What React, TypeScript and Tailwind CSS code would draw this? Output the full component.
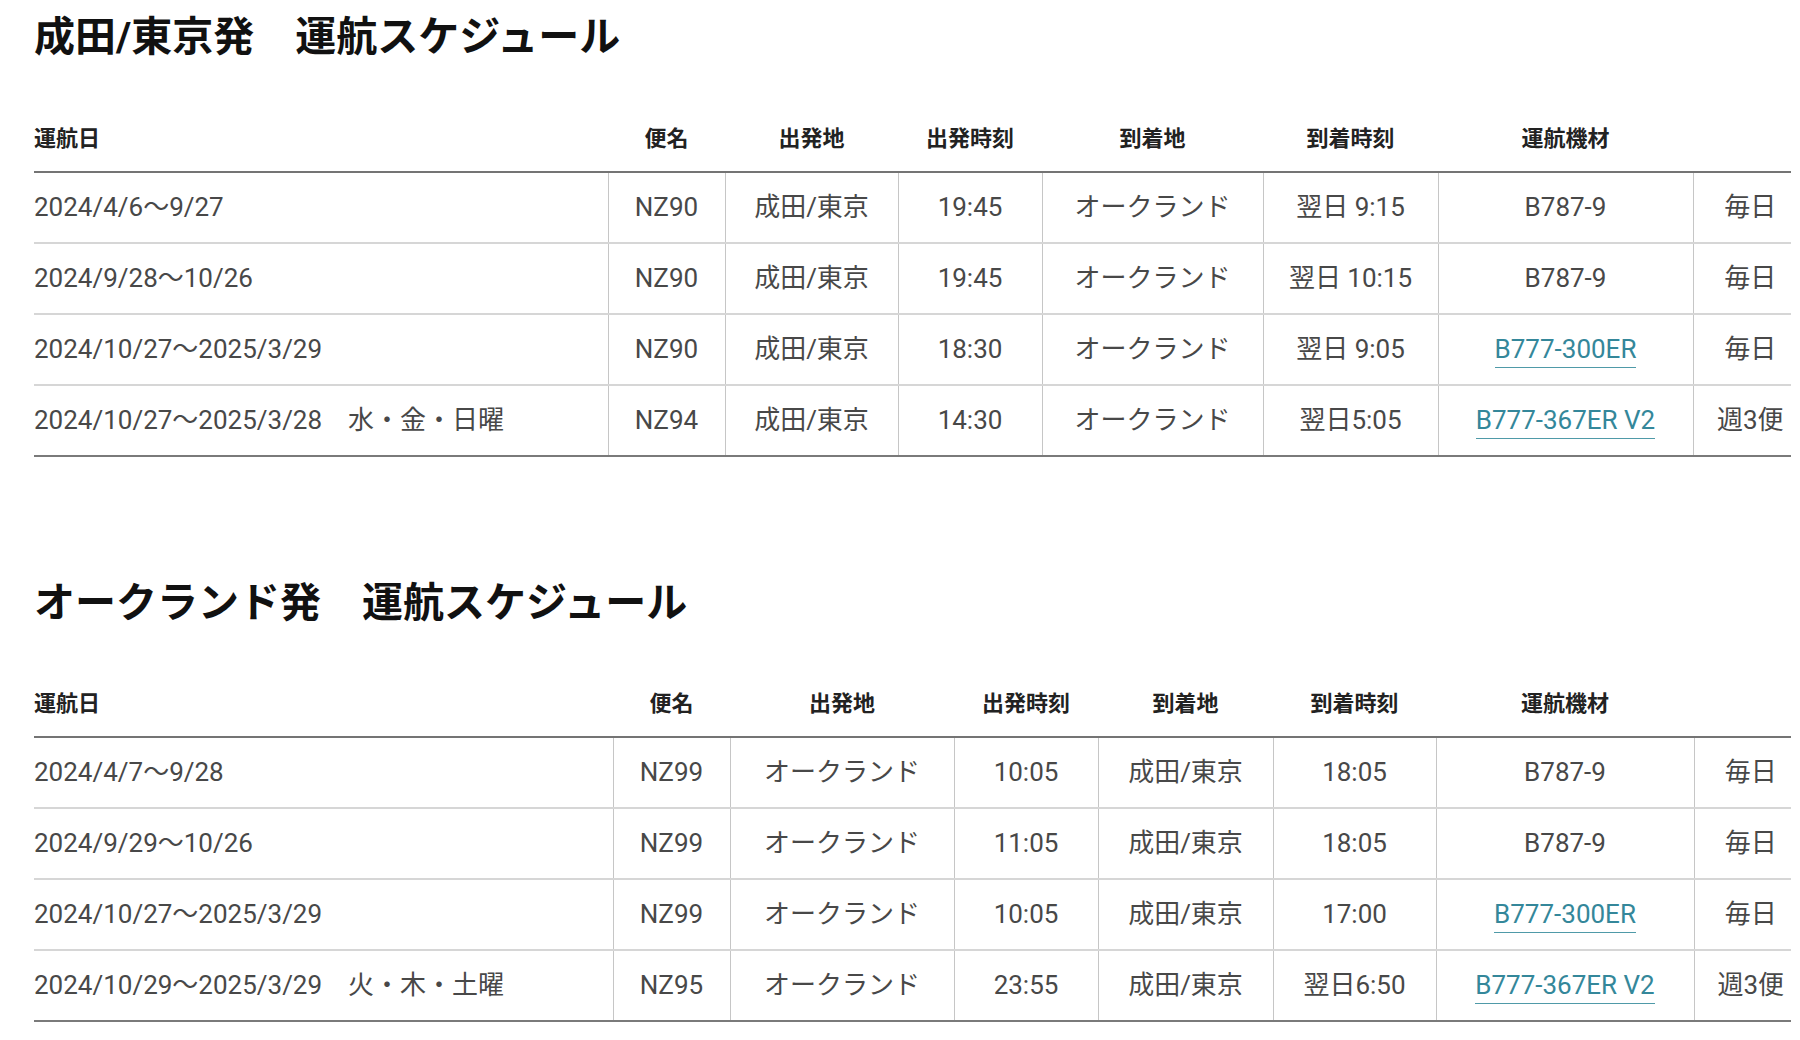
import React from 'react';

type Row = {
  period: string;
  flight: string;
  from: string;
  dep: string;
  to: string;
  arr: string;
  aircraft: string;
  link?: boolean;
  freq: string;
};

const outbound: Row[] = [
  { period: '2024/4/6～9/27', flight: 'NZ90', from: '成田/東京', dep: '19:45', to: 'オークランド', arr: '翌日 9:15', aircraft: 'B787-9', freq: '毎日' },
  { period: '2024/9/28～10/26', flight: 'NZ90', from: '成田/東京', dep: '19:45', to: 'オークランド', arr: '翌日 10:15', aircraft: 'B787-9', freq: '毎日' },
  { period: '2024/10/27～2025/3/29', flight: 'NZ90', from: '成田/東京', dep: '18:30', to: 'オークランド', arr: '翌日 9:05', aircraft: 'B777-300ER', link: true, freq: '毎日' },
  { period: '2024/10/27～2025/3/28　水・金・日曜', flight: 'NZ94', from: '成田/東京', dep: '14:30', to: 'オークランド', arr: '翌日5:05', aircraft: 'B777-367ER V2', link: true, freq: '週3便' },
];

const inbound: Row[] = [
  { period: '2024/4/7～9/28', flight: 'NZ99', from: 'オークランド', dep: '10:05', to: '成田/東京', arr: '18:05', aircraft: 'B787-9', freq: '毎日' },
  { period: '2024/9/29～10/26', flight: 'NZ99', from: 'オークランド', dep: '11:05', to: '成田/東京', arr: '18:05', aircraft: 'B787-9', freq: '毎日' },
  { period: '2024/10/27～2025/3/29', flight: 'NZ99', from: 'オークランド', dep: '10:05', to: '成田/東京', arr: '17:00', aircraft: 'B777-300ER', link: true, freq: '毎日' },
  { period: '2024/10/29～2025/3/29　火・木・土曜', flight: 'NZ95', from: 'オークランド', dep: '23:55', to: '成田/東京', arr: '翌日6:50', aircraft: 'B777-367ER V2', link: true, freq: '週3便' },
];

const headers = ['便名', '出発地', '出発時刻', '到着地', '到着時刻', '運航機材', ''];

function Schedule({ rows, widths }: { rows: Row[]; widths: string[] }) {
  return (
    <table className="w-[1757px] table-fixed border-collapse">
      <colgroup>
        {widths.map((w, i) => (
          <col key={i} className={w} />
        ))}
      </colgroup>
      <thead>
        <tr className="border-b-2 border-[#747474]">
          <th className="h-[66px] text-left align-middle text-[22px] font-bold text-[#222]">運航日</th>
          {headers.map((h, i) => (
            <th key={i} className="h-[66px] text-center align-middle text-[22px] font-bold text-[#222]">
              {h}
            </th>
          ))}
        </tr>
      </thead>
      <tbody>
        {rows.map((r, i) => (
          <tr
            key={i}
            className={i === rows.length - 1 ? 'border-b-2 border-[#7a7a7a]' : 'border-b-2 border-[#d6d6d6]'}
          >
            <td className="h-[71px] text-left align-middle whitespace-nowrap">{r.period}</td>
            <td className="border-l border-[#c6c6c6] text-center">{r.flight}</td>
            <td className="border-l border-[#c6c6c6] text-center">{r.from}</td>
            <td className="border-l border-[#c6c6c6] text-center">{r.dep}</td>
            <td className="border-l border-[#c6c6c6] text-center">{r.to}</td>
            <td className="border-l border-[#c6c6c6] text-center">{r.arr}</td>
            <td className="border-l border-[#c6c6c6] text-center">
              {r.link ? (
                <a className="inline-block border-b border-[#4f9aa8] pb-[2px] leading-[31px] text-[#34879a]">
                  {r.aircraft}
                </a>
              ) : (
                r.aircraft
              )}
            </td>
            <td className="border-l border-[#c6c6c6] pl-[16px] text-center whitespace-nowrap">{r.freq}</td>
          </tr>
        ))}
      </tbody>
    </table>
  );
}

export default function App() {
  return (
    <div className="min-h-screen bg-white pl-[34px] pt-[13px] font-['Roboto','Noto_Sans_CJK_JP',sans-serif] text-[26px] text-[#484848]">
      <h2 className="text-[41px] font-bold leading-[48px] text-[#111]">成田/東京発　運航スケジュール</h2>
      <div className="mt-[45px]">
        <Schedule
          rows={outbound}
          widths={['w-[574px]', 'w-[117px]', 'w-[173px]', 'w-[144px]', 'w-[221px]', 'w-[175px]', 'w-[255px]', 'w-[98px]']}
        />
      </div>

      <h2 className="mt-[122px] text-[41px] font-bold leading-[48px] text-[#111]">オークランド発　運航スケジュール</h2>
      <div className="mt-[44px]">
        <Schedule
          rows={inbound}
          widths={['w-[579px]', 'w-[117px]', 'w-[224px]', 'w-[144px]', 'w-[175px]', 'w-[163px]', 'w-[258px]', 'w-[97px]']}
        />
      </div>
    </div>
  );
}
